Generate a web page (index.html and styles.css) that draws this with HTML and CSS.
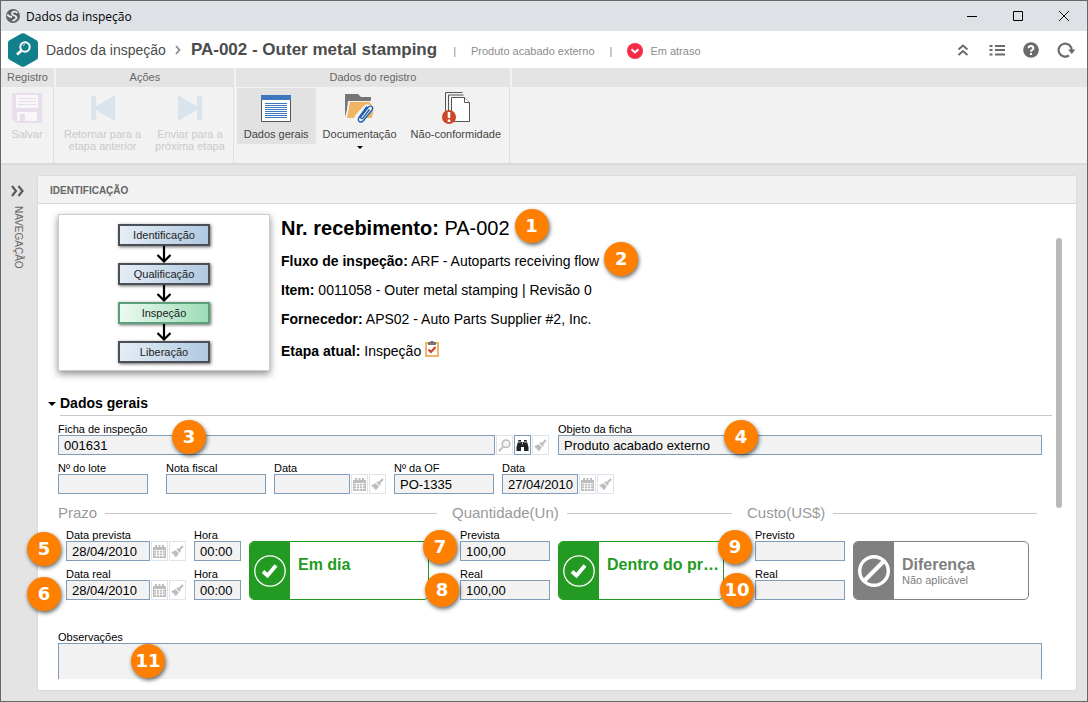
FILE: index.html
```html
<!DOCTYPE html>
<html lang="pt-BR">
<head>
<meta charset="utf-8">
<title>Dados da inspeção</title>
<link rel="stylesheet" href="styles.css">
</head>
<body>
<svg class="symbols" aria-hidden="true">
  <symbol id="calendar" viewBox="0 0 13 13">
    <path fill="#bdbdbd" d="M0 2h2V0h2v2h1.500V0h2v2H9V0h2v2h2v11H0z"/>
    <path stroke="#fff" d="M1 5.500h11M1 8h11M1 10.500h11M3.500 5v7.500M6.500 5v7.500M9.500 5v7.500" stroke-width=".8"/>
  </symbol>
  <symbol id="brush" viewBox="0 0 13 13">
    <path fill="#bdbdbd" d="M12.700 1.800 11.200.3 7.600 3.900 6.800 3.100 5.400 4.500l3.200 3.200L10 6.300l-.9-.9zM4.700 5.300.2 7.300l.9 1.200.9-.3-.5 1.200 1.200-.3-.2 1.300 1.500-.4-.5 1.400 1.600.5 2.800-3.500z"/>
  </symbol>
  <symbol id="check" viewBox="0 0 32 32">
    <circle cx="16" cy="16" r="15.200" fill="none" stroke="#fff" stroke-width="1.300"/>
    <path d="m9 16.500 4.500 4L22 10.500" fill="none" stroke="#fff" stroke-width="3.800"/>
  </symbol>
  <symbol id="arrow" viewBox="0 0 16 17">
    <path d="M8 0v15M1.500 9 8 15.500 14.500 9" fill="none" stroke="#000" stroke-width="2.200"/>
  </symbol>
</svg>
<div class="window">
  <header class="titlebar">
    <svg class="globe" viewBox="0 0 14 14"><circle cx="7" cy="7" r="7" fill="#5f6163"/><path fill="none" stroke="#e8eaec" stroke-width="1.800" d="M11.500 4C10 2.200 6.500 2 6 4s1.500 2.200 3 2.800 2 2.200.5 3.400-2.500 1-3 2M1.300 5.500c1.200 2 2.700 2.500 4.700 2.500"/></svg>
    <span class="window-title">Dados da inspeção</span>
    <button class="win-button" aria-label="Minimizar"><svg viewBox="0 0 12 12"><path d="M1 6.500h10"/></svg></button>
    <button class="win-button" aria-label="Maximizar"><svg viewBox="0 0 12 12"><path d="M1.500 1.500h9v9h-9z"/></svg></button>
    <button class="win-button" aria-label="Fechar"><svg viewBox="0 0 12 12"><path d="m1 1 10 10M11 1 1 11"/></svg></button>
  </header>

  <div class="appbar">
    <svg class="logo" viewBox="0 0 30 34"><path fill="#12808c" d="M13.500.6q1.500-.8 3 0l12 6.700q1.500.8 1.500 2.500v14.400q0 1.700-1.500 2.500l-12 6.700q-1.500.8-3 0l-12-6.700Q0 25.900 0 24.200V9.800q0-1.700 1.500-2.500z"/><circle cx="17" cy="14" r="4.700" fill="none" stroke="#fff" stroke-width="2"/><path d="m13.500 17.500-4.500 4" stroke="#fff" stroke-width="2.600"/><path d="M14.800 13a2.400 2.400 0 0 1 2-1.600" fill="none" stroke="#fff" stroke-width=".8"/></svg>
    <span class="crumb">Dados da inspeção</span>
    <svg class="crumb-arrow" viewBox="0 0 6 10"><path d="m1 1 3.500 4L1 9" fill="none" stroke="#8a8a8a" stroke-width="1.800"/></svg>
    <h1 class="record">PA-002 - Outer metal stamping</h1>
    <div class="meta">
      <span>|</span><span>Produto acabado externo</span><span>|</span>
      <span class="status"><svg class="late" viewBox="0 0 16 16"><circle cx="8" cy="8" r="8" fill="#f72b45"/><path d="M4.500 6.300 8 9.500l3.500-3.200" fill="none" stroke="#fff" stroke-width="2"/></svg>Em atraso</span>
    </div>
    <div class="tools">
      <button class="tool" aria-label="Recolher"><svg viewBox="0 0 16 16"><path d="M3.500 7.500 8 3.500l4.500 4M3.500 13 8 9l4.500 4" fill="none" stroke="#6b6b6b" stroke-width="2"/></svg></button>
      <button class="tool" aria-label="Lista"><svg viewBox="0 0 16 16"><path d="M.5 4h3m2.500 0h10M.5 8h3M6 8h10M.5 12.500h3m2.500 0h10" stroke="#6b6b6b" stroke-width="2"/></svg></button>
      <button class="tool" aria-label="Ajuda"><svg viewBox="0 0 16 16"><circle cx="8" cy="8" r="7.800" fill="#6b6b6b"/><path d="M5.600 6.300C5.600 3.400 10.400 3.400 10.400 6.200 10.400 8 8 7.800 8 9.800M8 11v2" fill="none" stroke="#fff" stroke-width="2"/></svg></button>
      <button class="tool tool-wide" aria-label="Atualizar"><svg viewBox="0 0 18 16"><path d="M12 13.300A6.500 6.500 0 1 1 14.600 8" fill="none" stroke="#6b6b6b" stroke-width="2.200"/><path d="M11 7.500h7.500l-3.700 4.500z" fill="#6b6b6b"/></svg></button>
    </div>
  </div>

  <div class="ribbon">
    <section class="ribbon-group">
      <h2 class="ribbon-title">Registro</h2>
      <div class="ribbon-body ribbon-center">
        <button class="command disabled" disabled><svg viewBox="0 0 30 30"><path fill="#e8deeb" d="M0 0h30v30H4l-4-4z"/><path fill="#f8f6f9" d="M4 2h22v13H4zM5 19h20v9H5z"/><path fill="#e8deeb" d="M8 21h5v7H8z"/><path stroke="#e4e0e6" d="M6 5.500h18M6 8.500h18M6 11.500h18"/></svg>Salvar</button>
      </div>
    </section>
    <section class="ribbon-group">
      <h2 class="ribbon-title">Ações</h2>
      <div class="ribbon-body">
        <button class="command disabled" disabled><svg viewBox="0 0 30 30"><path fill="#dae4ed" d="M3 3h5v10.500L27 2v26L8 17v10H3z"/></svg>Retornar para a<br>etapa anterior</button>
        <button class="command disabled" disabled><svg viewBox="0 0 30 30"><path fill="#dae4ed" d="M27 3h-5v10.500L3 2v26l19-11v10h5z"/></svg>Enviar para a<br>próxima etapa</button>
      </div>
    </section>
    <section class="ribbon-group">
      <h2 class="ribbon-title">Dados do registro</h2>
      <div class="ribbon-body">
        <button class="command selected"><svg viewBox="0 0 30 30"><path fill="#fff" stroke="#555" d="M.5 2.500h29v26H.5z"/><path fill="#3e78bd" d="M0 2h30v5H0z"/><path stroke="#3e78bd" d="M4 10.500h22M4 12.500h22M4 14.500h22M4 16.500h22M4 18.500h22M4 20.500h22M4 22.500h22M4 24.500h22"/></svg>Dados gerais</button>
        <button class="command"><svg viewBox="0 0 30 30"><path fill="#757575" d="M0 24V1h13l3 3h10v5H4z"/><path fill="#f2f2f2" d="M3 8h27v2L4 26H1z"/><path fill="#eeb663" d="M5 9h25l-3 16H2z"/><path d="m12 23 8-9c3-3 6 1 4 3.500l-7 8M12 23c-3 3.500 1 7 4 4l11.500-12.500c3-3.500-.5-6-2.500-4.500" fill="none" stroke="#f2f2f2" stroke-width="3.500"/><path d="M24.500 16.500 18 25c-1.500 1.500-3 0-2-1.500l7-9c2.500-3 6-.5 4 2.500l-8 10c-3 4-7.500 1-5-2.500l8-11" fill="none" stroke="#1b5fb0" stroke-width="1.300"/></svg>Documentação<span class="caret"></span></button>
        <button class="command"><svg viewBox="0 0 30 30"><path d="M4.500 18V-.5h17M7.500 18V2h15" fill="none" stroke="#555"/><path fill="#fff" stroke="#555" d="M10.500 4.500h13l5 5v19h-18z"/><path fill="#fff" stroke="#555" d="M23.500 4.500v5h5"/><circle cx="8" cy="24" r="7" fill="#cf4527"/><path d="M8 19v6M8 26.500V29" stroke="#fff" stroke-width="2.600"/></svg>Não-conformidade</button>
      </div>
    </section>
    <div class="ribbon-group ribbon-rest"><div class="ribbon-title"></div></div>
  </div>

  <div class="workspace">
    <nav class="sidenav">
      <button class="expand" aria-label="Expandir navegação"><svg viewBox="0 0 14 12"><path d="m1 1 4 5-4 5M7.500 1l4 5-4 5" fill="none" stroke="#5a5a5a" stroke-width="2.200"/></svg></button>
      <span class="nav-label">NAVEGAÇÃO</span>
    </nav>
    <main class="panel">
      <h2 class="panel-title">IDENTIFICAÇÃO</h2>
      <div class="panel-body">
        <div class="content">
          <section class="summary">
            <div class="flow">
              <div class="step">Identificação</div>
              <svg class="flow-arrow"><use href="#arrow"/></svg>
              <div class="step">Qualificação</div>
              <svg class="flow-arrow"><use href="#arrow"/></svg>
              <div class="step current">Inspeção</div>
              <svg class="flow-arrow"><use href="#arrow"/></svg>
              <div class="step">Liberação</div>
            </div>
            <div class="facts">
              <p class="receipt"><b>Nr. recebimento:</b> <span class="marked">PA-002<span class="badge after">1</span></span></p>
              <p><b>Fluxo de inspeção:</b> <span class="marked">ARF - Autoparts receiving flow<span class="badge after">2</span></span></p>
              <p><b>Item:</b> 0011058 - Outer metal stamping | Revisão 0</p>
              <p><b>Fornecedor:</b> APS02 - Auto Parts Supplier #2, Inc.</p>
              <p class="stage"><b>Etapa atual:</b> Inspeção <svg class="clipboard" viewBox="0 0 14 16"><path fill="#fff" stroke="#eeb663" stroke-width="2" d="M1 2h12v13H1z"/><path fill="#757575" d="M3 1h2.500V0h3v1H11v3H3z"/><path d="m3.500 8.500 2.500 2.500 4.500-5" fill="none" stroke="#cf4030" stroke-width="2"/></svg></p>
            </div>
          </section>

          <div class="section-head"><span class="caret"></span><h3>Dados gerais</h3></div>

          <form class="form">
            <div class="row-main">
              <div class="field">
                <label for="ficha">Ficha de inspeção</label>
                <div class="control">
                  <input id="ficha" class="grow" value="001631" readonly>
                  <button type="button" class="mini" aria-label="Pesquisar"><svg viewBox="0 0 13 13"><circle cx="8" cy="4.800" r="3.800" fill="#f4f4f4" stroke="#bdbdbd" stroke-width="1.500"/><path d="M5.200 7.800.8 12" stroke="#bdbdbd" stroke-width="1.800"/></svg></button>
                  <button type="button" class="mini active" aria-label="Visualizar"><svg viewBox="0 0 13 13"><path fill="#222" d="M2.500 1h2.500v2h3V1h2.500l2 7v4H8V8H5v4H.5V8z"/><path stroke="#fff" stroke-width=".8" d="M6.500 3.500v1.800M2 3h3M8 3h3"/></svg></button>
                  <button type="button" class="mini" aria-label="Limpar"><svg><use href="#brush"/></svg></button>
                </div>
                <span class="badge b3">3</span>
              </div>
              <div class="field">
                <label for="objeto">Objeto da ficha</label>
                <div class="control"><input id="objeto" class="grow" value="Produto acabado externo" readonly></div>
                <span class="badge b4">4</span>
              </div>
            </div>

            <div class="row-lot">
              <div class="field lot"><label for="lote">Nº do lote</label><div class="control"><input id="lote" class="w90" readonly></div></div>
              <div class="field"><label for="nota">Nota fiscal</label><div class="control"><input id="nota" class="w100" readonly></div></div>
              <div class="field"><label for="data1">Data</label><div class="control"><input id="data1" class="w76" readonly><button type="button" class="mini" aria-label="Calendário"><svg><use href="#calendar"/></svg></button><button type="button" class="mini" aria-label="Limpar"><svg><use href="#brush"/></svg></button></div></div>
              <div class="field"><label for="of">Nº da OF</label><div class="control"><input id="of" class="w100" value="PO-1335" readonly></div></div>
              <div class="field"><label for="data2">Data</label><div class="control"><input id="data2" class="w76" value="27/04/2010" readonly><button type="button" class="mini" aria-label="Calendário"><svg><use href="#calendar"/></svg></button><button type="button" class="mini" aria-label="Limpar"><svg><use href="#brush"/></svg></button></div></div>
            </div>

            <div class="groups">
              <section class="group">
                <h4 class="legend">Prazo</h4>
                <div class="group-body">
                  <div class="stack">
                    <div class="field"><label for="dprev">Data prevista</label><div class="control"><input id="dprev" class="w84" value="28/04/2010" readonly><button type="button" class="mini" aria-label="Calendário"><svg><use href="#calendar"/></svg></button><button type="button" class="mini" aria-label="Limpar"><svg><use href="#brush"/></svg></button></div><span class="badge left5">5</span></div>
                    <div class="field"><label for="dreal">Data real</label><div class="control"><input id="dreal" class="w84" value="28/04/2010" readonly><button type="button" class="mini" aria-label="Calendário"><svg><use href="#calendar"/></svg></button><button type="button" class="mini" aria-label="Limpar"><svg><use href="#brush"/></svg></button></div><span class="badge left6">6</span></div>
                  </div>
                  <div class="stack">
                    <div class="field"><label for="h1">Hora</label><div class="control"><input id="h1" class="w47" value="00:00" readonly></div></div>
                    <div class="field"><label for="h2">Hora</label><div class="control"><input id="h2" class="w47" value="00:00" readonly></div></div>
                  </div>
                  <div class="card ok"><div class="card-icon"><svg><use href="#check"/></svg></div><div class="card-text"><strong>Em dia</strong></div></div>
                </div>
              </section>
              <section class="group">
                <h4 class="legend">Quantidade(Un)</h4>
                <div class="group-body">
                  <div class="stack">
                    <div class="field"><label for="qprev">Prevista</label><div class="control"><input id="qprev" class="w90" value="100,00" readonly></div><span class="badge upper">7</span></div>
                    <div class="field"><label for="qreal">Real</label><div class="control"><input id="qreal" class="w90" value="100,00" readonly></div><span class="badge lower">8</span></div>
                  </div>
                  <div class="card ok"><div class="card-icon"><svg><use href="#check"/></svg></div><div class="card-text"><strong>Dentro do pr…</strong></div></div>
                </div>
              </section>
              <section class="group">
                <h4 class="legend">Custo(US$)</h4>
                <div class="group-body">
                  <div class="stack">
                    <div class="field"><label for="cprev">Previsto</label><div class="control"><input id="cprev" class="w90" readonly></div><span class="badge upper">9</span></div>
                    <div class="field"><label for="creal">Real</label><div class="control"><input id="creal" class="w90" readonly></div><span class="badge lower">10</span></div>
                  </div>
                  <div class="card na"><div class="card-icon"><svg viewBox="0 0 32 32"><circle cx="16" cy="16" r="14.300" fill="none" stroke="#fff" stroke-width="3.400"/><path d="M6.500 25.500l19-19" stroke="#fff" stroke-width="4"/></svg></div><div class="card-text"><strong>Diferença</strong><small>Não aplicável</small></div></div>
                </div>
              </section>
            </div>

            <div class="field notes">
              <label for="obs">Observações</label>
              <div class="notes-clip"><textarea id="obs" readonly></textarea></div>
              <span class="badge b11">11</span>
            </div>
          </form>
        </div>
        <div class="scroll-thumb"></div>
      </div>
    </main>
  </div>
</div>
</body>
</html>
```

FILE: styles.css
```css
* { box-sizing: border-box; }

body {
  margin: 0;
  color: #000;
  font-family: "Liberation Sans", Arial, sans-serif;
  font-size: 11px;
}

h1, h2, h3, h4, p { margin: 0; }

button {
  border: 0;
  padding: 0;
  background: none;
  color: inherit;
  font: inherit;
}

svg { display: block; flex: none; }

.symbols { position: absolute; width: 0; height: 0; }

.window {
  display: flex;
  flex-direction: column;
  min-height: 100vh;
  border: 1px solid #67676a;
  background: #e4e4e4;
}

/* Title bar */
.titlebar {
  display: flex;
  align-items: center;
  height: 30px;
  padding-left: 5px;
  background: #dee1e6;
}
.globe { width: 14px; height: 14px; }
.window-title {
  flex: 1;
  padding-left: 6px;
  font-family: "Open Sans", "Noto Sans", sans-serif;
  font-size: 12px;
}
.win-button {
  display: flex;
  align-items: center;
  justify-content: center;
  width: 46px;
  height: 30px;
}
.win-button svg {
  width: 12px;
  height: 12px;
  fill: none;
  stroke: #000;
}

/* Record header */
.appbar {
  display: flex;
  align-items: center;
  height: 37px;
  padding: 0 12px 0 7px;
  background: #fff;
  color: #4c4c4c;
}
.logo { width: 30px; height: 34px; }
.crumb { padding: 0 9px 0 8px; font-size: 14px; }
.crumb-arrow { width: 6px; height: 10px; }
.record { padding-left: 10px; font-size: 17px; }
.meta {
  display: flex;
  flex: 1;
  align-items: center;
  gap: 15px;
  padding: 2px 0 0 16px;
  color: #8c8c8c;
}
.status { display: flex; align-items: center; gap: 7px; }
.late { width: 16px; height: 16px; }
.tools { display: flex; gap: 18px; }
.tool svg { width: 16px; height: 16px; }
.tool-wide svg { width: 18px; }

/* Ribbon */
.ribbon {
  display: flex;
  gap: 2px;
  border-bottom: 2px solid #d9d9d9;
  background: #f2f2f2;
}
.ribbon-group { min-width: 53px; }
.ribbon-title {
  height: 19px;
  background: #e4e4e4;
  color: #666;
  font-size: 11px;
  font-weight: normal;
  line-height: 18px;
  text-align: center;
}
.ribbon-body {
  display: flex;
  align-items: flex-start;
  height: 76px;
  padding: 1px 1px 0;
  border-right: 1px solid #e0e0e0;
}
.ribbon-center { justify-content: center; }
.ribbon-rest { flex: 1; }
.command {
  display: flex;
  flex-direction: column;
  align-items: center;
  min-height: 56px;
  padding: 5px 7px 4px;
  color: #444;
  font-size: 11px;
  line-height: 12px;
}
.command svg {
  width: 30px;
  height: 30px;
  margin-bottom: 5px;
  overflow: visible;
}
.command.disabled { color: #cacaca; }
.command.selected { background: #e2e2e2; }
.caret {
  width: 0;
  border: 4px solid transparent;
  border-top-color: #000;
  border-bottom: 0;
}
.command .caret { margin-top: 6px; border-width: 3px 3px 0; }

/* Workspace */
.workspace { display: flex; flex: 1; }
.sidenav {
  display: flex;
  flex-direction: column;
  align-items: center;
  gap: 9px;
  width: 37px;
  padding: 20px 3px 0 0;
}
.expand svg { width: 14px; height: 12px; }
.nav-label {
  color: #666;
  font-size: 10px;
  line-height: 12px;
  writing-mode: vertical-rl;
}
.panel {
  display: flex;
  flex: 1;
  flex-direction: column;
  margin: 11px 11px 11px 0;
  border-radius: 2px;
  background: #fff;
  box-shadow: 0 0 1px 1px #dadada;
}
.panel-title {
  height: 28px;
  padding-left: 12px;
  border-bottom: 1px solid #d9d9d9;
  background: #f2f2f2;
  color: #666;
  font-size: 10px;
  line-height: 29px;
}
.panel-body {
  display: flex;
  flex: 1;
  gap: 4px;
  padding: 10px 14px 11px 10px;
}
.content { display: flex; flex: 1; flex-direction: column; }
.scroll-thumb {
  width: 6px;
  height: 270px;
  margin-top: 24px;
  border-radius: 3px;
  background: #bababa;
}

/* Summary */
.summary { display: flex; align-items: flex-start; gap: 11px; padding-left: 10px; }
.flow {
  display: flex;
  flex-direction: column;
  align-items: center;
  width: 212px;
  height: 157px;
  padding-top: 9px;
  border: 1px solid #ccc;
  background: #fff;
  box-shadow: 0 3px 7px rgba(0, 0, 0, .45);
}
.step {
  width: 92px;
  height: 22px;
  border: 2px solid #4b5058;
  background: linear-gradient(100deg, #e6eef6, #afc8e0);
  box-shadow: 1px 1px 3px rgba(0, 0, 0, .6);
  color: #222;
  line-height: 18px;
  text-align: center;
}
.step.current {
  border-color: #5aa078;
  background: linear-gradient(100deg, #eefaf2, #9bdcb6);
}
.flow-arrow { width: 16px; height: 17px; }
.facts { font-size: 14px; line-height: 29px; }
.facts .receipt { margin-bottom: 5px; font-size: 20px; line-height: 28px; }
.facts .stage { display: flex; gap: 4px; align-items: center; height: 34px; }
.clipboard { width: 14px; height: 16px; margin-bottom: 5px; }
.marked { position: relative; }

/* Form */
.section-head {
  display: flex;
  align-items: center;
  gap: 4px;
  margin-top: 20px;
}
.section-head h3 {
  flex: 1;
  border-bottom: 1px solid #c8c8c8;
  font-size: 14px;
  line-height: 24px;
}
.form {
  display: flex;
  flex: 1;
  flex-direction: column;
  padding: 7px 10px 0;
}
.row-main {
  display: grid;
  grid-template-columns: 491fr 484fr;
  gap: 9px;
}
.row-lot { display: flex; gap: 8px; margin-top: 7px; }
.lot { margin-right: 10px; }
.field { position: relative; }
.field label { display: block; font-size: 11px; line-height: 12px; }
.control { display: flex; gap: 1px; }
.control input {
  min-width: 0;
  height: 20px;
  padding: 0 2px 0 5px;
  border: 1px solid #7f9db9;
  border-radius: 0;
  background: #f2f2f2;
  color: #000;
  font-family: inherit;
  font-size: 13px;
}
.grow { flex: 1; }
.w47 { width: 47px; }
.w76 { width: 76px; }
.w84 { width: 84px; }
.w90 { width: 90px; }
.w100 { width: 100px; }
.mini {
  display: flex;
  align-items: center;
  justify-content: center;
  width: 17px;
  height: 20px;
  border: 1px solid #dde4ec;
  background: #fff;
}
.mini.active { border-color: #7f9db9; }
.mini svg { width: 13px; height: 13px; }

.groups {
  display: grid;
  grid-template-columns: 379fr 280fr 290fr;
  gap: 15px;
  margin: 10px 5px 0 0;
}
.legend {
  display: flex;
  align-items: center;
  gap: 8px;
  color: #999;
  font-size: 15px;
  font-weight: normal;
  line-height: 18px;
}
.legend::after { flex: 1; height: 1px; background: #c8c8c8; content: ""; }
.group { min-width: 0; }
.group-body { display: flex; gap: 8px; padding: 7px 8px 0; }
.stack { display: grid; gap: 7px; }
.card {
  display: flex;
  flex: 1;
  min-width: 0;
  margin-top: 12px;
  border: 1px solid;
  border-radius: 5px;
  overflow: hidden;
}
.card.ok { border-color: #239b23; color: #239b23; }
.card.na { border-color: #808080; color: #808080; }
.card-icon {
  display: flex;
  flex: none;
  align-items: center;
  justify-content: center;
  width: 40px;
}
.ok .card-icon { background: #239b23; }
.na .card-icon { background: #808080; }
.card-icon svg { width: 32px; height: 32px; }
.card-text { min-width: 0; padding: 13px 4px 0 8px; }
.card-text strong {
  display: block;
  font-size: 16px;
  line-height: 19px;
  white-space: nowrap;
}
.card-text small { display: block; font-size: 11px; line-height: 13px; }

.notes {
  display: flex;
  flex: 1;
  flex-direction: column;
  margin-top: 31px;
}
.notes-clip {
  flex: 1;
  max-height: 80px;
  overflow: hidden;
  contain: size;
}
.notes textarea {
  display: block;
  width: 100%;
  height: 80px;
  border: 1px solid #7f9db9;
  background: #f2f2f2;
  resize: none;
}

/* Numbered callouts */
.badge {
  position: absolute;
  z-index: 1;
  min-width: 34px;
  height: 34px;
  border-radius: 17px;
  background: #ff8000;
  box-shadow: 1px 2px 4px rgba(0, 0, 0, .6);
  color: #fff;
  font-family: "DejaVu Sans", Verdana, sans-serif;
  font-size: 18px;
  font-weight: bold;
  line-height: 34px;
  text-align: center;
}
.badge.after { top: 50%; left: 100%; margin: -19px 0 0 5px; }
.b3 { top: -3px; left: 114px; }
.b4 { top: -3px; left: 166px; }
.left5 { top: 3px; left: -39px; }
.left6 { top: 9px; left: -39px; }
.upper { top: 1px; left: -37px; }
.lower { top: 5px; left: -35px; }
.b11 { top: 13px; left: 73px; }
```
